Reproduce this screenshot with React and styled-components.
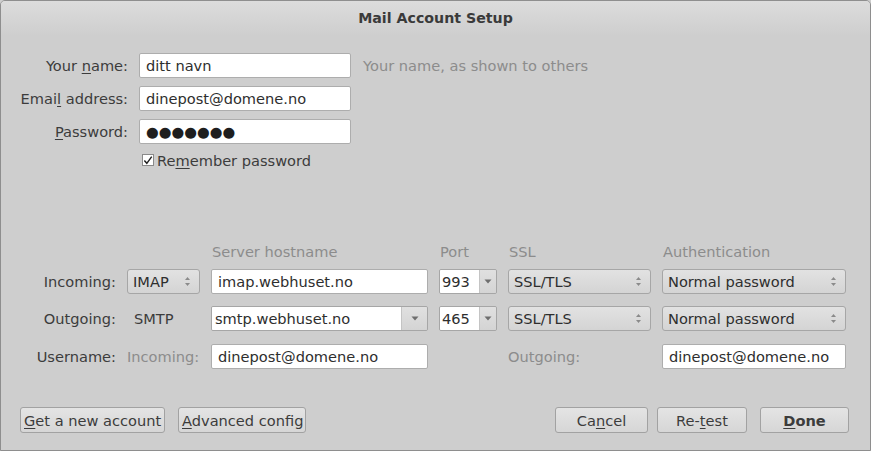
import styled, { createGlobalStyle } from "styled-components";

const Global = createGlobalStyle`
  html, body { margin: 0; padding: 0; background: #cecece; }
  body { font-family: "DejaVu Sans", "Liberation Sans", sans-serif; font-size: 14.6px; color: #3c3c3c; }
`;

const Window = styled.div`
  width: 871px;
  height: 451px;
  box-sizing: border-box;
  border: 1px solid #8e8e8e;
  border-radius: 5px 5px 0 0;
  background: #cecece;
  display: flex;
  flex-direction: column;
  overflow: hidden;
`;

const TitleBar = styled.div`
  height: 35px;
  flex: none;
  display: flex;
  justify-content: center;
  align-items: center;
  padding-bottom: 2px;
  box-sizing: border-box;
  background: linear-gradient(#dcdcdc, #cecece);
  font-weight: bold;
  font-size: 14.2px;
  color: #3a3a3a;
`;

const Body = styled.div`
  flex: 1;
  display: flex;
  flex-direction: column;
  padding: 17px 21px 17px 19px;
`;

const TopForm = styled.div`
  display: grid;
  grid-template-columns: 108px 212px auto;
  grid-template-rows: 25px 25px 25px 16px;
  column-gap: 11px;
  row-gap: 8px;
  align-items: center;
`;

const Label = styled.label`
  white-space: nowrap;
  color: ${(p) => (p.$muted ? "#8c8c8c" : "#3c3c3c")};
  text-align: ${(p) => (p.$left ? "left" : "right")};
`;

const Hint = styled.span`
  color: #8c8c8c;
  padding-left: 1px;
  white-space: nowrap;
`;

const Key = styled.span`
  text-decoration: underline;
  text-underline-offset: 2px;
`;

const TextBox = styled.div`
  height: 25px;
  box-sizing: border-box;
  background: #fff;
  border: 1px solid #adadad;
  border-radius: 2px;
  padding: 0 6px;
  display: flex;
  align-items: center;
  color: #2e2e2e;
  white-space: nowrap;
  overflow: hidden;
`;

const Dots = styled.span`
  font-size: 14.6px;
  color: #1e1e1e;
`;

const CheckRow = styled.div`
  grid-column: 2 / 4;
  display: flex;
  align-items: center;
  gap: 3px;
  padding-left: 3px;
  height: 16px;
`;

const CheckBox = styled.span`
  width: 12px;
  height: 12px;
  box-sizing: border-box;
  background: #fff;
  border: 1px solid #8a8a8a;
  display: flex;
  align-items: center;
  justify-content: center;
`;

const ServerGrid = styled.div`
  margin-top: 76px;
  display: grid;
  grid-template-columns: 96px 73px 217px 58px 143px 184px;
  column-gap: 11px;
  row-gap: 12.5px;
  grid-template-rows: auto 25px 25px 26px;
  align-items: center;
`;

const Header = styled.span`
  color: #8c8c8c;
  grid-column: ${(p) => p.$col};
  margin-bottom: -4px;
  padding-left: 1px;
  line-height: 16px;
  white-space: nowrap;
`;

const PlainText = styled.span`
  padding-left: 7px;
  color: #3c3c3c;
`;

const Select = styled.div`
  height: 25px;
  box-sizing: border-box;
  border: 1px solid #a6a6a6;
  border-radius: 3px;
  background: linear-gradient(#e2e2e2, #d4d4d4);
  display: flex;
  align-items: center;
  justify-content: space-between;
  padding: 0 8px 0 5px;
  color: #2e2e2e;
  white-space: nowrap;
`;

const Combo = styled.div`
  height: 25px;
  box-sizing: border-box;
  border: 1px solid #a6a6a6;
  border-radius: 2px;
  display: flex;
  overflow: hidden;
`;

const ComboText = styled.div`
  flex: 1;
  background: #fff;
  display: flex;
  align-items: center;
  padding-left: ${(p) => p.$pad || 4}px;
  color: #2e2e2e;
  white-space: nowrap;
`;

const ComboButton = styled.div`
  width: ${(p) => p.$w}px;
  flex: none;
  border-left: 1px solid #c4c4c4;
  background: linear-gradient(#e0e0e0, #d4d4d4);
  display: flex;
  align-items: center;
  justify-content: center;
`;

const Buttons = styled.div`
  margin-top: auto;
  display: flex;
  align-items: center;
`;

const Button = styled.button`
  height: 26px;
  box-sizing: border-box;
  width: ${(p) => (p.$w ? `${p.$w}px` : "auto")};
  margin-left: ${(p) => p.$gap || 0}px;
  padding: 0 3px;
  border: 1px solid #a2a2a2;
  border-radius: 3px;
  background: linear-gradient(#e4e4e4, #d6d6d6);
  font-family: inherit;
  font-size: 14.6px;
  font-weight: ${(p) => (p.$bold ? "bold" : "normal")};
  color: #3c3c3c;
  white-space: nowrap;
`;

const Spacer = styled.div`
  flex: 1;
`;

function UpDown() {
  return (
    <svg width="7" height="11" viewBox="0 0 7 11">
      <path d="M3.5 1 L6 4 L1 4 Z" fill="#8a8a8a" />
      <path d="M3.5 10 L6 7 L1 7 Z" fill="#8a8a8a" />
    </svg>
  );
}

function Down() {
  return (
    <svg width="8" height="5" viewBox="0 0 8 5">
      <path d="M0.5 0.5 L7.5 0.5 L4 4.5 Z" fill="#6e6e6e" />
    </svg>
  );
}

function Check() {
  return (
    <svg width="11" height="11" viewBox="0 0 11 11">
      <path d="M1.5 5.5 L4.2 8.6 L9.6 1.2" fill="none" stroke="#222" strokeWidth="1.6" />
    </svg>
  );
}

export default function App() {
  return (
    <>
      <Global />
      <Window>
        <TitleBar>Mail Account Setup</TitleBar>
        <Body>
          <TopForm>
            <Label>Your <Key>n</Key>ame:</Label>
            <TextBox>ditt navn</TextBox>
            <Hint>Your name, as shown to others</Hint>

            <Label>Emai<Key>l</Key> address:</Label>
            <TextBox>dinepost@domene.no</TextBox>
            <span />

            <Label><Key>P</Key>assword:</Label>
            <TextBox><Dots>●●●●●●●</Dots></TextBox>
            <span />

            <span />
            <CheckRow>
              <CheckBox><Check /></CheckBox>
              <span>Re<Key>m</Key>ember password</span>
            </CheckRow>
          </TopForm>

          <ServerGrid>
            <Header $col={3}>Server hostname</Header>
            <Header $col={4}>Port</Header>
            <Header $col={5}>SSL</Header>
            <Header $col={6}>Authentication</Header>

            <Label>Incoming:</Label>
            <Select>IMAP<UpDown /></Select>
            <TextBox>imap.webhuset.no</TextBox>
            <Combo>
              <ComboText $pad={2}>993</ComboText>
              <ComboButton $w={16}><Down /></ComboButton>
            </Combo>
            <Select>SSL/TLS<UpDown /></Select>
            <Select>Normal password<UpDown /></Select>

            <Label>Outgoing:</Label>
            <PlainText>SMTP</PlainText>
            <Combo>
              <ComboText $pad={3}>smtp.webhuset.no</ComboText>
              <ComboButton $w={25}><Down /></ComboButton>
            </Combo>
            <Combo>
              <ComboText $pad={2}>465</ComboText>
              <ComboButton $w={16}><Down /></ComboButton>
            </Combo>
            <Select>SSL/TLS<UpDown /></Select>
            <Select>Normal password<UpDown /></Select>

            <Label>Username:</Label>
            <Label $muted $left>Incoming:</Label>
            <TextBox>dinepost@domene.no</TextBox>
            <span />
            <Label $muted $left>Outgoing:</Label>
            <TextBox>dinepost@domene.no</TextBox>
          </ServerGrid>

          <Buttons>
            <Button $w={145}><Key>G</Key>et a new account</Button>
            <Button $w={128} $gap={13}><Key>A</Key>dvanced config</Button>
            <Spacer />
            <Button $w={93}>Ca<Key>n</Key>cel</Button>
            <Button $w={90} $gap={9}>Re-<Key>t</Key>est</Button>
            <Button $w={89} $gap={13} $bold><Key>D</Key>one</Button>
          </Buttons>
        </Body>
      </Window>
    </>
  );
}
